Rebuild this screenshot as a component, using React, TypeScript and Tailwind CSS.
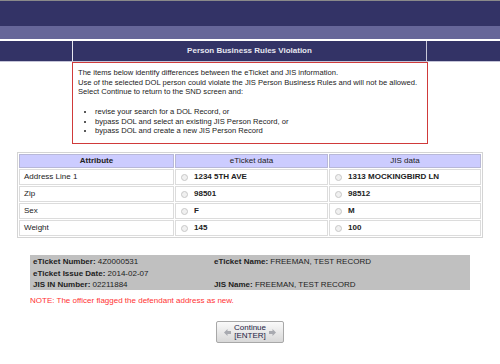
import React from "react";

const rows = [
  { attr: "Address Line 1", eticket: "1234 5TH AVE", jis: "1313 MOCKINGBIRD LN" },
  { attr: "Zip", eticket: "98501", jis: "98512" },
  { attr: "Sex", eticket: "F", jis: "M" },
  { attr: "Weight", eticket: "145", jis: "100" },
];

const Radio = () => (
  <span className="inline-block w-[7px] h-[7px] rounded-full border border-[#c8c8c8] bg-[#f0f0f0] mr-[6px]" />
);

const Arrow = ({ dir }: { dir: "l" | "r" }) => (
  <svg width="7" height="7" viewBox="0 0 7 7">
    {dir === "l" ? (
      <path d="M0 3.5 L3.5 0 V2 H7 V5 H3.5 V7 Z" fill="#a8aab0" />
    ) : (
      <path d="M7 3.5 L3.5 0 V2 H0 V5 H3.5 V7 Z" fill="#a8aab0" />
    )}
  </svg>
);

const App = () => {
  return (
    <div className="w-[500px] h-[364px] bg-white overflow-hidden font-['Liberation_Sans',Arial,sans-serif] text-[8px] text-[#222]">
      {/* Header bands */}
      <div className="h-[1px] bg-[#8a8a8a]" />
      <div className="h-[25px] bg-[#333366]" />
      <div className="h-[13px] bg-[#666699]" />
      <div className="h-[2px] bg-white" />
      <div className="flex h-[20px] bg-[#333366]">
        <div className="w-[72px]" />
        <div className="w-[1px] bg-[#e8e8f0]" />
        <div className="flex-1 flex items-center justify-center text-[#e6e6f0] font-bold text-[8px]">
          Person Business Rules Violation
        </div>
        <div className="w-[1px] bg-[#c8c8d8]" />
        <div className="w-[73px]" />
      </div>
      <div className="h-[1px] bg-[#c4c4d8]" />

      {/* Message box */}
      <div className="ml-[72px] w-[356px] h-[82px] border-[1.5px] border-[#d03a3a] px-[5px] pt-[5px] leading-[9.7px] text-[7.6px] whitespace-nowrap">
        <div>The items below identify differences between the eTicket and JIS information.</div>
        <div>Use of the selected DOL person could violate the JIS Person Business Rules and will not be allowed.</div>
        <div>Select Continue to return to the SND screen and:</div>
        <ul className="mt-[9.7px] ml-[17px] list-disc">
          <li>revise your search for a DOL Record, or</li>
          <li>bypass DOL and select an existing JIS Person Record, or</li>
          <li>bypass DOL and create a new JIS Person Record</li>
        </ul>
      </div>

      {/* Comparison table */}
      <div className="ml-[17px] mt-[8px] w-[466px] border border-[#d4d4d4] p-[1px] grid grid-cols-[155px_153px_1fr] gap-[1px]">
        <div className="h-[14px] bg-[#ccccff] border border-[#b8b8d8] flex items-center justify-center font-bold">Attribute</div>
        <div className="h-[14px] bg-[#ccccff] border border-[#b8b8d8] flex items-center justify-center">eTicket data</div>
        <div className="h-[14px] bg-[#ccccff] border border-[#b8b8d8] flex items-center justify-center">JIS data</div>
        {rows.map((r) => (
          <React.Fragment key={r.attr}>
            <div className="h-[16px] border border-[#dcdcdc] flex items-center px-[4px]">{r.attr}</div>
            <div className="h-[16px] border border-[#dcdcdc] flex items-center px-[5px] font-bold">
              <Radio />
              {r.eticket}
            </div>
            <div className="h-[16px] border border-[#dcdcdc] flex items-center px-[5px] font-bold">
              <Radio />
              {r.jis}
            </div>
          </React.Fragment>
        ))}
      </div>

      {/* Record info */}
      <div className="ml-[30px] mt-[17px] w-[440px] h-[35px] bg-[#c0c0c0] px-[3px] pt-[1px] grid grid-cols-[181px_1fr] leading-[11.5px]">
        <div><b>eTicket Number:</b> 4Z0000531</div>
        <div><b>eTicket Name:</b> FREEMAN, TEST RECORD</div>
        <div><b>eTicket Issue Date:</b> 2014-02-07</div>
        <div />
        <div><b>JIS IN Number:</b> 02211884</div>
        <div><b>JIS Name:</b> FREEMAN, TEST RECORD</div>
      </div>
      <div className="ml-[30px] mt-[5px] text-[#ff3333]">NOTE: The officer flagged the defendant address as new.</div>

      {/* Continue button */}
      <div className="flex justify-center mt-[14px]">
        <button className="w-[68px] h-[22px] rounded-[2px] border border-[#a8a8a8] bg-gradient-to-b from-[#fafafa] to-[#d8d8d8] flex items-center justify-center gap-[3px] text-[#222244] text-[8px] leading-[8.5px]">
          <Arrow dir="l" />
          <span className="text-center">
            Continue
            <br />
            [ENTER]
          </span>
          <Arrow dir="r" />
        </button>
      </div>
    </div>
  );
};

export default App;
